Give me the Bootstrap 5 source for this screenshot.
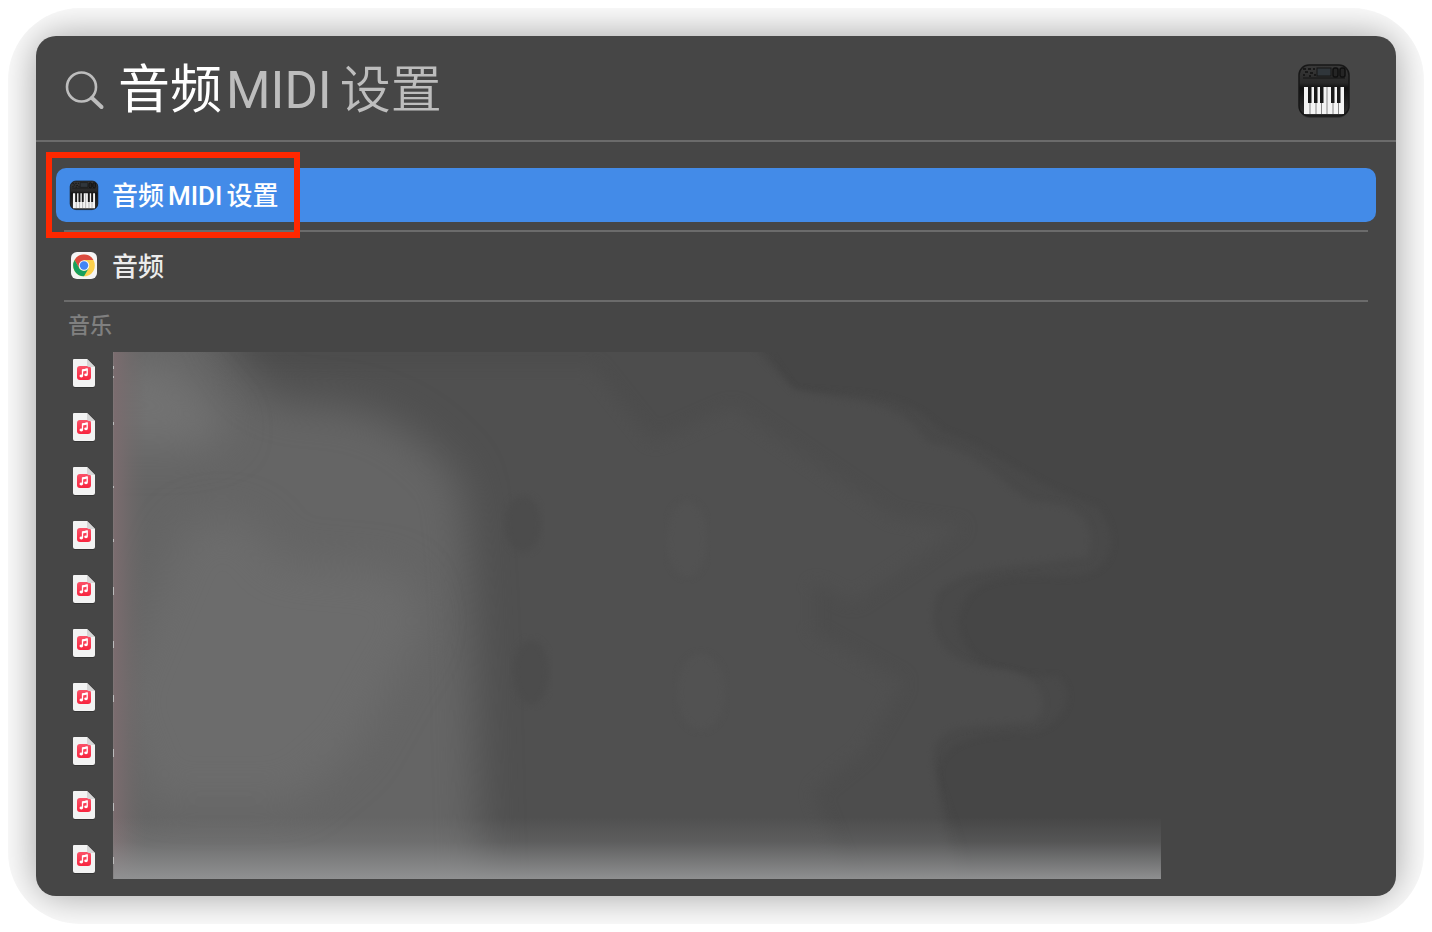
<!DOCTYPE html>
<html lang="zh-CN">
<head>
<meta charset="utf-8">
<meta name="viewport" content="width=device-width, initial-scale=1">
<title>音频MIDI设置</title>
<link href="https://cdn.jsdelivr.net/npm/bootstrap@5.3.0/dist/css/bootstrap.min.css" rel="stylesheet">
<style>
body{background:#fff;font-family:Roboto,"Noto Sans CJK SC",sans-serif}
.stage{padding:8px}
.halo{padding:28px;border-radius:72px;background:#fdfdfd}
.spotlight{background:#464646;border-radius:20px;box-shadow:0 0 40px rgba(0,0,0,.38);color:#e8e8e8}
.search-bar{height:106px;padding:6px 46px 0 28px;border-bottom:2px solid #6b6b6b}
.query{width:108px;padding:0;border:0;background:none;color:#fff;font-size:52px;line-height:72px;height:72px;outline:0}
.completion{color:#bdbdbd;font-size:51px;line-height:72px;font-weight:350}
.completion .latin{font-weight:400;margin-right:8px}
.search-icon{margin-right:12px}
.results{padding:26px 20px 10px}
.hit{height:54px;padding:2px 12px 0;border:0;border-radius:10px;background:none;color:#ececec;font-size:26px;line-height:38px;font-weight:500}
.hit.active{background:#438be8;color:#fff}
.hit svg{margin-right:12px}
.hit .latin{margin:0 4px}
.rule{height:2px;margin:0 8px;background:#6b6b6b}
.rule + .hit{margin:7px 0}
.callout-box{left:-10px;top:-16px;width:254px;height:86px;border:6px solid #ff2800;pointer-events:none}
.group-title{margin:0;padding:4px 12px 0;font-size:22px;line-height:40px;font-weight:500;color:#808080}
.files{width:57px}
.file-link{height:54px;padding:2px 0 0 14px}
.redacted{margin:6px 215px 7px 0;min-width:0}
.redacted svg{display:block;width:100%;height:100%}
</style>
</head>
<body>
<main class="stage">
<div class="halo overflow-hidden">
<div class="spotlight">
  <form class="search-bar d-flex align-items-center" role="search">
    <svg width="42" height="42" viewBox="0 0 42 42" fill="none" stroke="#bdbdbd" stroke-linecap="round" aria-hidden="true" class="search-icon flex-shrink-0"><circle cx="17.500" cy="17" r="14.500" stroke-width="2.600"/><path d="M28 28L37.500 37" stroke-width="4"/></svg>
    <input class="query" id="q" type="text" value="音频" aria-label="搜索">
    <label class="completion" for="q"><span class="latin">MIDI</span>设置</label>
    <svg class="ms-auto flex-shrink-0" width="52" height="54" viewBox="0 0 52 54" aria-hidden="true"><use href="#keyboard"/></svg>
  </form>
  <div class="results">
    <div class="position-relative">
      <button type="button" class="hit active w-100 d-flex align-items-center text-start">
        <svg width="32" height="32" viewBox="-3 -1 58 58" aria-hidden="true"><use href="#keyboard"/></svg>音频<span class="latin">MIDI</span>设置
      </button>
      <div class="callout-box position-absolute"></div>
    </div>
    <div class="rule mt-2"></div>
    <button type="button" class="hit w-100 d-flex align-items-center text-start">
      <svg width="32" height="32" viewBox="0 0 32 32" aria-hidden="true"><rect x="3" y="1" width="26" height="27" rx="6" fill="#f5f5f5"/><circle cx="16" cy="14.500" r="10.800" fill="#fcd04b"/><path d="M6.600 9.100A10.800 10.800 0 0 1 25.400 9.100H16L11.300 17.200Z" fill="#db4b3f"/><path d="M6.600 9.100A10.800 10.800 0 0 0 16 25.300L20.700 17.200 16 19.900 11.300 17.200Z" fill="#17a05d"/><circle cx="16" cy="14.500" r="5.300" fill="#f5f5f5"/><circle cx="16" cy="14.500" r="4.200" fill="#4285f4"/></svg>音频
    </button>
    <div class="rule"></div>
    <h2 class="group-title">音乐</h2>
    <div class="d-flex align-items-stretch">
      <nav class="files flex-shrink-0 d-flex flex-column" aria-label="音乐">
        <a href="#" class="file-link d-flex align-items-center" aria-label="1"><svg width="43" height="32" viewBox="0 0 43 32"><use href="#song"/></svg></a>
        <a href="#" class="file-link d-flex align-items-center" aria-label="2"><svg width="43" height="32" viewBox="0 0 43 32"><use href="#song"/></svg></a>
        <a href="#" class="file-link d-flex align-items-center" aria-label="3"><svg width="43" height="32" viewBox="0 0 43 32"><use href="#song"/></svg></a>
        <a href="#" class="file-link d-flex align-items-center" aria-label="4"><svg width="43" height="32" viewBox="0 0 43 32"><use href="#song"/></svg></a>
        <a href="#" class="file-link d-flex align-items-center" aria-label="5"><svg width="43" height="32" viewBox="0 0 43 32"><use href="#song"/></svg></a>
        <a href="#" class="file-link d-flex align-items-center" aria-label="6"><svg width="43" height="32" viewBox="0 0 43 32"><use href="#song"/></svg></a>
        <a href="#" class="file-link d-flex align-items-center" aria-label="7"><svg width="43" height="32" viewBox="0 0 43 32"><use href="#song"/></svg></a>
        <a href="#" class="file-link d-flex align-items-center" aria-label="8"><svg width="43" height="32" viewBox="0 0 43 32"><use href="#song"/></svg></a>
        <a href="#" class="file-link d-flex align-items-center" aria-label="9"><svg width="43" height="32" viewBox="0 0 43 32"><use href="#song"/></svg></a>
        <a href="#" class="file-link d-flex align-items-center" aria-label="10"><svg width="43" height="32" viewBox="0 0 43 32"><use href="#song"/></svg></a>
      </nav>
      <div class="redacted flex-grow-1 position-relative">
        <svg class="position-absolute top-0 start-0" viewBox="0 0 1048 527" preserveAspectRatio="none" aria-hidden="true">
          <rect width="1048" height="527" fill="#464646"/>
          <path filter="url(#soft4)" fill="#494949" d="M0-20H640L680 38C760 45 790 40 830 80 880 95 910 130 985 155 1010 190 1000 225 950 225 880 220 850 230 845 270 850 320 900 325 945 325 965 345 950 370 920 380 850 380 820 395 825 430 835 460 850 500 860 540H0Z"/>
          <path filter="url(#soft4)" fill="#4d4d4d" d="M0-20H625L680 38C760 55 780 45 815 90 870 100 890 135 920 150 970 150 985 175 975 205 900 215 850 215 825 240 810 280 830 315 890 318 920 320 945 350 920 370 850 375 820 370 820 410 825 440 830 480 850 540H0Z"/>
          <path filter="url(#soft12)" fill="#505050" d="M0 15H480L540 90 620 55 700 110 780 165 850 175 800 210 740 250 700 230 700 280 790 330 750 400 700 440 740 540H0Z"/>
          <path filter="url(#soft20)" fill="#656565" d="M-60-60H90C120 10 140 50 190 52 260 50 310 80 348 130 365 250 360 400 370 570H-60Z"/>
          <path filter="url(#soft20)" fill="#6c6c6c" d="M70 180Q130 140 165 210L280 220Q330 260 290 310L240 400 180 450H40L0 350Z"/>
          <path d="M-40 10H60L120 80 80 95H-40Z" fill="#727272" filter="url(#soft20)"/>
          <ellipse cx="410" cy="172" rx="18" ry="28" fill="#4c4c4c" filter="url(#soft4)"/>
          <ellipse cx="418" cy="320" rx="18" ry="32" fill="#4c4c4c" filter="url(#soft4)"/>
          <ellipse cx="574" cy="187" rx="20" ry="38" fill="#525252" filter="url(#soft4)"/>
          <ellipse cx="588" cy="340" rx="24" ry="38" fill="#525252" filter="url(#soft4)"/>
          <rect width="34" height="527" fill="url(#rose)"/>
          <rect y="465" width="1048" height="62" fill="url(#floor)"/>
          <path d="M.5 0V527" stroke="#807b7b" stroke-opacity=".5"/>
          <path d="M.5 14V17M.5 24V26M.5 70V73M.5 134V136M.5 187V190M.5 235V243M.5 289V296M.5 343V350M.5 397V405M.5 451V459M.5 505V512" stroke="#bbb"/>
        </svg>
      </div>
    </div>
  </div>
</div>
</div>
</main>

<svg width="0" height="0" class="position-absolute" aria-hidden="true">
  <defs>
    <filter id="soft4" color-interpolation-filters="sRGB"><feGaussianBlur stdDeviation="3"/></filter>
    <filter id="soft12" color-interpolation-filters="sRGB" x="-20%" y="-20%" width="140%" height="140%"><feGaussianBlur stdDeviation="8"/></filter>
    <filter id="soft20" color-interpolation-filters="sRGB" x="-100%" y="-100%" width="300%" height="300%"><feGaussianBlur stdDeviation="20"/></filter>
    <linearGradient id="rose"><stop stop-color="#7c6c6f"/><stop offset=".3" stop-color="#776b6d" stop-opacity=".75"/><stop offset="1" stop-color="#6c6868" stop-opacity="0"/></linearGradient>
    <linearGradient id="floor" x2="0" y2="1"><stop stop-color="#929394" stop-opacity="0"/><stop offset=".4" stop-color="#929394" stop-opacity=".2"/><stop offset="1" stop-color="#929394" stop-opacity=".95"/></linearGradient>
    <linearGradient id="case" x2="0" y2="1"><stop stop-color="#393939"/><stop offset=".35" stop-color="#292929"/><stop offset=".45" stop-color="#111"/><stop offset="1" stop-color="#303030"/></linearGradient>
    <linearGradient id="tune" x2="0" y2="1"><stop stop-color="#fb5268"/><stop offset="1" stop-color="#f7253f"/></linearGradient>
    <g id="keyboard">
      <rect x="1" y="3" width="50" height="51" rx="11" fill="#000" opacity=".25"/>
      <rect x="1" y="1" width="50" height="51" rx="10" fill="url(#case)" stroke="#171717" stroke-width="1.500"/>
      <path d="M5 14H47" stroke="#151515"/>
      <rect x="19" y="4" width="14" height="8" fill="#30363b" stroke="#161616"/>
      <path d="M5 5h3M7 8h3M10 5h3M12 9h3M15 5h2M5 11h2M11 12h2M16 11h2" stroke="#111" stroke-width="1.500"/>
      <rect x="35" y="4" width="5" height="9" rx="2" fill="#252525" stroke="#101010" stroke-width="1.500"/><rect x="42" y="4" width="5" height="9" rx="2" fill="#252525" stroke="#101010" stroke-width="1.500"/>
      <path d="M6 23H46V50H6Z" fill="#f4f4f4"/>
      <path d="M12 23V50M18 23V50M23.500 23V50M29 23V50M35 23V50M40.500 23V50" stroke="#888"/>
      <path d="M10 22h3.500v17h-3.500zM16 22h3.500v17h-3.500zM22 22h3.500v17h-3.500zM33 22h3.500v17h-3.500zM39 22h3.500v17h-3.500z" fill="#181818"/>
    </g>
    <g id="song">
      <path d="M4 2H17L25 10V28Q25 30 23 30H5Q3 30 3 28V3Q3 2 4 2Z" fill="#222" opacity=".5"/>
      <path d="M4 1H17L25 9V27Q25 29 23 29H5Q3 29 3 27V2Q3 1 4 1Z" fill="#f3f3f3"/>
      <rect x="7" y="8" width="14" height="14" rx="3" fill="url(#tune)"/>
      <path d="M17 1V7Q17 9 19 9H25Z" fill="#d6d6d6"/>
      <path d="M12.500 17.700V12L17.200 11V16.500" fill="none" stroke="#fff" stroke-width="1.300"/><path d="M12.500 12.500L17.200 11.500" stroke="#fff" stroke-width="2"/><ellipse cx="11.300" cy="18" rx="1.800" ry="1.400" fill="#fff"/><ellipse cx="16" cy="16.800" rx="1.800" ry="1.400" fill="#fff"/>
    </g>
  </defs>
</svg>
<script src="https://cdn.jsdelivr.net/npm/bootstrap@5.3.0/dist/js/bootstrap.bundle.min.js"></script>
</body>
</html>
